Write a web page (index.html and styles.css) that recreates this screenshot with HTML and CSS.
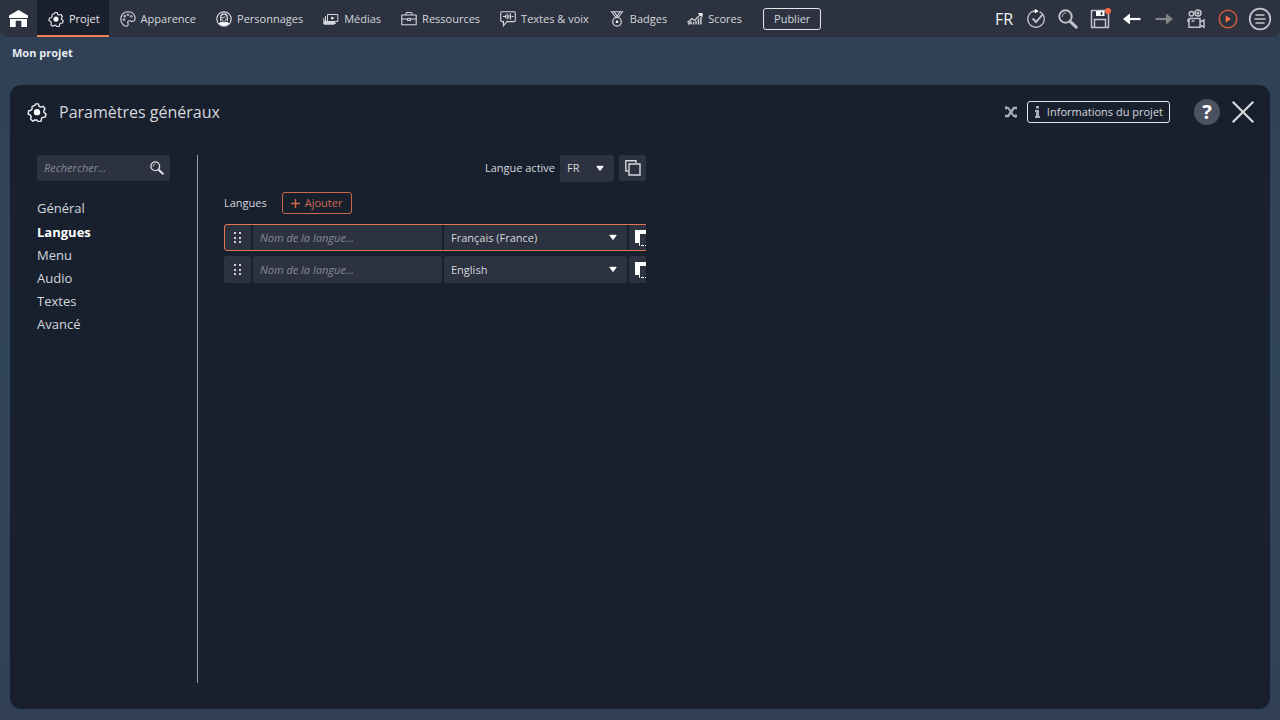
FILE: index.html
```html
<!DOCTYPE html>
<html lang="fr">
<head>
<meta charset="utf-8">
<meta name="viewport" content="width=device-width, initial-scale=1">
<title>Paramètres généraux</title>
<link rel="stylesheet" href="styles.css">
</head>
<body class="app">
<svg class="defs" aria-hidden="true">
  <symbol id="gear" viewBox="0 0 24 24"><path d="M10.3 2.2h3.4l.8 3 1.9.9 3-.9 2.2 2.9-1.5 2.6.4 2 2.4 1.8-1 3.5-3.1.4-1.5 1.5-.1 2.8-3.4 1.2-2.1-2.3h-2.1l-2.5 1.3-2.8-2.2.7-3-.9-1.9-2.7-1.4.4-3.6 3-.9 1.3-1.6.1-3.1 3.3-1.1z" fill="none" stroke="currentColor" stroke-width="1.700" stroke-linejoin="round"/><circle cx="12" cy="12.200" r="3.800" fill="#fff"/></symbol>
  <symbol id="search" viewBox="0 0 20 20"><circle cx="7.500" cy="7.500" r="6.200" fill="none" stroke="currentColor" stroke-width="2"/><path d="M4.400 7.900A3.400 3.400 0 0 1 7.800 4.100" fill="none" stroke="currentColor" stroke-width="1"/><path d="M12.400 12.600l5.800 5.600" stroke="currentColor" stroke-width="3" stroke-linecap="round"/></symbol>
  <symbol id="caret" viewBox="0 0 10 7"><path d="M1.800 1.300h6.400L5 5.600z" fill="#fff" stroke="#fff" stroke-linejoin="round"/></symbol>
  <symbol id="grip" viewBox="0 0 8 12"><path d="M0 0h2v2H0zM5 0h2v2H5zM0 5h2v2H0zM5 5h2v2H5zM0 9h2v2H0zM5 9h2v2H5z" fill="#cfd2d8"/></symbol>
  <symbol id="duplicate" viewBox="0 0 16 16"><path d="M0 0h13v4H5v9H0z" fill="#fff"/><path d="M4.500 13v2.500h11v-11" fill="none" stroke="#fff" stroke-dasharray="3 1"/></symbol>
</svg>

<header class="topbar">
  <button class="home" aria-label="Accueil"><svg width="21" height="18" viewBox="0 0 21 18"><path d="M10.500 0L20 5.500V8H1V5.500zM2 9h17v8H2z" fill="#fff"/><path d="M1 8.500h19M8 17v-6h5v6" fill="#2c323f" stroke="#2c323f" stroke-width=".6"/></svg></button>
  <nav class="tabs" aria-label="Navigation principale">
    <a class="tab tab-active" href="#projet"><svg class="icon"><use href="#gear"/></svg>Projet</a>
    <a class="tab" href="#apparence"><svg class="icon" viewBox="0 0 16 16"><path d="M8 .8C3.500.8.8 4 .8 8s3 7.200 5.500 7.200c2.400 0 2-2.200 1.500-3.400s.6-2.200 2-2 2.300 1.200 3.700.3S15.300 7.500 15 6C14.200 2.700 11.200.8 8 .8z" fill="none" stroke="currentColor" stroke-width="1.100"/><g fill="none" stroke="currentColor"><circle cx="4" cy="8.600" r=".9"/><circle cx="4.700" cy="5.200" r=".9"/><circle cx="8" cy="3.700" r=".9"/><circle cx="11.300" cy="5.400" r=".9"/></g></svg>Apparence</a>
    <a class="tab" href="#personnages"><svg class="icon" viewBox="0 0 16 16"><circle cx="8" cy="8" r="7.200" fill="none" stroke="currentColor" stroke-width="1.200"/><path d="M4.700 10V6.300a3.300 3.300 0 0 1 6.600 0V10" fill="none" stroke="currentColor" stroke-width="1.300"/><path d="M5.500 6.500Q8.500 7 9.500 5.200M6 7.500c0 4 4 4 4 0" fill="none" stroke="currentColor" stroke-width=".9"/><path d="M2.600 12.600Q4 11 6.300 10.800q1.700 1.300 3.400 0 2.300.2 3.700 1.800Q8 17.500 2.600 12.600z" fill="#fff"/></svg>Personnages</a>
    <a class="tab" href="#medias"><svg class="icon" viewBox="0 0 16 16"><g fill="none" stroke="currentColor"><path d="M4.500 3.500h10.300v7H4.500zM2.500 5v7.400H13M.8 7v6h10.500"/></g><path d="M1 10l2-1 1 1.500h8V12l-1 1.500H1z" fill="currentColor"/><path d="M8.300 5.400l3.200 1.700-3.200 1.700z" fill="#fff"/></svg>Médias</a>
    <a class="tab" href="#ressources"><svg class="icon" viewBox="0 0 16 16"><path d="M.8 4h14.400v9.700H.8zM.8 8h5.700m3 0h5.700M6.500 7.500h3v2h-3zM5 4V2.500q0-1 1-1h4q1 0 1 1V4" fill="none" stroke="currentColor" stroke-width="1.100" stroke-linejoin="round"/></svg>Ressources</a>
    <a class="tab" href="#textes"><svg class="icon" viewBox="0 0 16 16"><path d="M2 .8h12.300q1 0 1 1v7.800q0 1-1 1H7l-3.600 4 .1-4H2q-1.200 0-1.200-1V1.800q0-1 1.200-1zM3 5.500h2m6.500 0h2M5.500 4v3M7.200 2.500v6M8.800 4v3.200M10.500 2.500v6" fill="none" stroke="currentColor" stroke-width="1.100"/></svg>Textes &amp; voix</a>
    <a class="tab" href="#badges"><svg class="icon" viewBox="0 0 16 16"><path d="M2.500.8h11L9.500 6h-3zM5 .8L8 5l3-4.200" fill="none" stroke="currentColor" stroke-width="1.100"/><circle cx="8" cy="10.800" r="4.300" fill="none" stroke="currentColor" stroke-width="1.200"/><circle cx="8" cy="10.800" r="1.300" fill="#fff"/></svg>Badges</a>
    <a class="tab" href="#scores"><svg class="icon" viewBox="0 0 16 16"><path d="M.5 11.500l4.500-4 2.500 2L14 3" fill="none" stroke="currentColor" stroke-width="1.200"/><path d="M10.800 2H15.500V6.500z" fill="#fff"/><path d="M1 13.500l2-2M4 13.500v-3.200M6.500 13.500V11M9 13.500V9.800M11.500 13.500V7.500M13.900 13.500V6" stroke="currentColor" stroke-width="1.400"/></svg>Scores</a>
  </nav>
  <button class="outline-btn publish">Publier</button>
  <div class="tools">
    <button class="tool lang">FR</button>
    <button class="tool" aria-label="Vérifier"><svg width="20" height="20" viewBox="0 0 20 20" fill="none" stroke="currentColor"><path d="M13.500 2.600A8.200 8.200 0 1 1 8.800 1.900" stroke-width="1.300"/><path d="M16.500 5.500L10 13 6.700 9.500" stroke-width="1.900"/><path d="M9 .5l3 1.600-3 1.600z" fill="#fff" stroke="#fff"/></svg></button>
    <button class="tool" aria-label="Rechercher"><svg width="20" height="20"><use href="#search"/></svg></button>
    <button class="tool save" aria-label="Enregistrer"><svg width="20" height="20" viewBox="0 0 20 20" fill="none" stroke="currentColor"><path d="M1.500 1.500h14l3 3v14h-17zM4.500 18V10.500h11V18" stroke-width="1.500"/><path d="M6 2h8.500v5H6z" fill="#fff" stroke="none"/><path d="M11.500 3v3" stroke="#2c323f" stroke-width="1.600"/></svg><span class="dot"></span></button>
    <button class="tool bright" aria-label="Annuler"><svg width="20" height="20" viewBox="0 0 20 20"><path d="M8 4.500v11L1 10z" fill="currentColor"/><path d="M6 10h12.500" stroke="currentColor" stroke-width="2.200"/></svg></button>
    <button class="tool muted" aria-label="Rétablir"><svg width="20" height="20" viewBox="0 0 20 20"><path d="M12 4.500v11l7-5.500z" fill="currentColor"/><path d="M1.500 10H14" stroke="currentColor" stroke-width="2.200"/></svg></button>
    <button class="tool" aria-label="Caméra"><svg width="20" height="20" viewBox="0 0 20 20" fill="none" stroke="currentColor" stroke-width="1.500"><circle cx="5.500" cy="4.800" r="2.300"/><circle cx="12" cy="4" r="3"/><circle cx="12" cy="4" r=".8"/><path d="M3 9.500h11v8.700H3zM14 13l4-2v7.200L14 16M2 10v3M5.500 12h3"/></svg></button>
    <button class="tool play" aria-label="Lecture"><svg width="20" height="20" viewBox="0 0 20 20"><circle cx="10" cy="10" r="8.800" fill="none" stroke="#c9593c" stroke-width="1.600"/><path d="M7.700 6.200L12.800 10l-5.100 3.800z" fill="#ff6e45"/></svg></button>
    <button class="tool" aria-label="Menu"><svg width="24" height="24" viewBox="0 0 24 24" fill="none" stroke="currentColor"><circle cx="12" cy="12" r="10.300" stroke-width="1.700"/><path d="M7.500 8h9M6.500 12h11M7.500 16h9" stroke-width="1.500"/></svg></button>
  </div>
</header>

<p class="project-name">Mon projet</p>

<main class="dialog">
  <div class="dialog-head">
    <svg class="title-icon"><use href="#gear"/></svg>
    <h1 class="title">Paramètres généraux</h1>
    <button class="plain-btn" aria-label="Variables"><svg width="12" height="12" viewBox="0 0 12 12" fill="none" stroke="#a9adb5" stroke-width="2"><path d="M0 2h3.200L8.800 10H12"/><path d="M0 10h3.200L8.800 2H12" stroke-width="2.300"/><path d="M1.200 0v3.500M10.800 8.500V12" stroke-width="1.500"/></svg></button>
    <button class="outline-btn info"><svg width="5" height="12" viewBox="0 0 5 12" fill="#a9adb5"><path d="M1 0h3v2.500H1zM0 4h4v6h1v2H0v-2h1V6H0z"/></svg>Informations du projet</button>
    <button class="help" aria-label="Aide">?</button>
    <button class="plain-btn" aria-label="Fermer"><svg width="22" height="22" viewBox="0 0 22 22" stroke="#dcdee2" stroke-width="2"><path d="M.7.7l20.600 20.600M21.300.7L.7 21.300"/></svg></button>
  </div>

  <div class="dialog-body">
    <aside class="sidebar">
      <label class="search">
        <input class="search-input" type="text" placeholder="Rechercher..." aria-label="Rechercher">
        <svg class="search-icon"><use href="#search"/></svg>
      </label>
      <nav class="sections" aria-label="Sections">
        <a class="section" href="#general">Général</a>
        <a class="section section-active" href="#langues">Langues</a>
        <a class="section" href="#menu">Menu</a>
        <a class="section" href="#audio">Audio</a>
        <a class="section" href="#textes-section">Textes</a>
        <a class="section" href="#avance">Avancé</a>
      </nav>
    </aside>

    <section class="content">
      <div class="active-lang">
        <label for="active">Langue active</label>
        <span class="select select-small"><select id="active"><option>FR</option><option>EN</option></select><svg class="caret"><use href="#caret"/></svg></span>
        <button class="cell" aria-label="Copier"><svg width="16" height="16" viewBox="0 0 16 16" fill="none" stroke="#d4d7dc" stroke-width="1.400"><path d="M4 4h11v11H4z"/><path d="M3 11H.8V.8H11V3"/></svg></button>
      </div>
      <div class="langs-head">
        <h2 class="langs-title">Langues</h2>
        <button class="outline-btn add"><svg width="9" height="9" viewBox="0 0 9 9"><path d="M4.500 0v9M0 4.500h9" stroke="currentColor" stroke-width="1.500"/></svg>Ajouter</button>
      </div>
      <ul class="langs">
        <li class="lang-row lang-row-selected">
          <button class="cell" aria-label="Déplacer"><svg width="8" height="12"><use href="#grip"/></svg></button>
          <input class="name" type="text" placeholder="Nom de la langue..." aria-label="Nom de la langue 1">
          <span class="select select-wide"><select aria-label="Langue 1"><option>Français (France)</option></select><svg class="caret"><use href="#caret"/></svg></span>
          <button class="cell" aria-label="Dupliquer la langue 1"><svg width="16" height="16"><use href="#duplicate"/></svg></button>
        </li>
        <li class="lang-row">
          <button class="cell" aria-label="Déplacer"><svg width="8" height="12"><use href="#grip"/></svg></button>
          <input class="name" type="text" placeholder="Nom de la langue..." aria-label="Nom de la langue 2">
          <span class="select select-wide"><select aria-label="Langue 2"><option>English</option></select><svg class="caret"><use href="#caret"/></svg></span>
          <button class="cell" aria-label="Dupliquer la langue 2"><svg width="16" height="16"><use href="#duplicate"/></svg></button>
        </li>
      </ul>
    </section>
  </div>
</main>
</body>
</html>
```
FILE: styles.css
```css
* { box-sizing: border-box; }

.app {
  margin: 0;
  min-height: 100vh;
  display: flex;
  flex-direction: column;
  background: linear-gradient(#304054, #31455a 50%, #314056);
  color: #d4d7dd;
  font: 11px/16px "Open Sans", sans-serif;
}

button, input, select { font: inherit; color: inherit; margin: 0; }
button { display: flex; align-items: center; justify-content: center; padding: 0; border: 0; background: none; cursor: pointer; }
a { color: inherit; text-decoration: none; }
svg { display: block; flex: none; }
.defs { position: absolute; width: 0; height: 0; }

.topbar {
  display: flex;
  align-items: center;
  height: 37px;
  padding-right: 8px;
  background: #2c323f;
  border-radius: 0 0 8px 8px;
}
.home { width: 37px; height: 37px; }
.tabs { display: flex; align-self: stretch; }
.tab {
  display: flex;
  align-items: center;
  gap: 5px;
  padding: 2px 9px 0 11px;
  border-bottom: 2px solid transparent;
}
.tab-active { background: #1a202d; border-color: #ee7d59; color: #e6e8ec; }
.icon { width: 16px; height: 16px; }

.outline-btn {
  height: 22px;
  padding: 0 10px;
  border: 1px solid #e4e6ea;
  border-radius: 3px;
}
.publish { margin-left: 12px; }

.tools { display: flex; margin-left: auto; }
.tool { position: relative; width: 32px; height: 32px; color: #c0c3ca; }
.tools .tool:last-child { width: 24px; margin-left: 4px; }
.tools .lang { font-size: 16px; font-weight: 500; color: #f2f3f5; }
.tools .bright { color: #fff; }
.tools .muted { color: #858585; }
.dot {
  position: absolute;
  top: 5px;
  right: 5px;
  width: 6px;
  height: 6px;
  border-radius: 50%;
  background: #ff6844;
}

.project-name { margin: 8px 12px 24px; font-weight: 700; color: #e6ebf1; }

.dialog {
  flex: 1;
  display: flex;
  flex-direction: column;
  margin: 0 10px 11px;
  padding: 13px 16px 26px 17px;
  border-radius: 11px;
  background: #19202d;
}
.dialog-head { display: flex; align-items: center; height: 28px; }
.title-icon { width: 20px; height: 20px; color: #eceef1; }
.title { margin: 0 auto 0 12px; font-size: 16px; line-height: 24px; font-weight: 400; }
.info { gap: 7px; margin: 0 24px 0 10px; padding: 0 6px 0 7px; }
.help {
  width: 26px;
  height: 26px;
  margin-right: 12px;
  border-radius: 50%;
  background: #4b5160;
  color: #fff;
  font-size: 20px;
  font-weight: 700;
}

.dialog-body { flex: 1; display: flex; margin-top: 29px; padding-left: 10px; }
.sidebar { width: 161px; padding-right: 27px; border-right: 1px solid #989ba2; }
.search { display: flex; align-items: center; height: 26px; padding: 0 6px 0 7px; background: #2c323f; border-radius: 3px; }
.search-input { flex: 1; min-width: 0; padding: 0; border: 0; background: none; }
.search-icon { width: 14px; height: 14px; color: #dcdee2; }
::placeholder { color: #858a95; opacity: 1; font-style: italic; }

.sections { display: flex; flex-direction: column; margin-top: 16px; }
.section { font-size: 13px; line-height: 23px; }
.section-active { line-height: 24px; font-weight: 700; color: #fff; }

.content { width: 448px; padding-left: 26px; overflow: hidden; }
.active-lang { display: flex; align-items: center; justify-content: flex-end; gap: 5px; height: 26px; }
.cell { flex: none; width: 27px; height: 27px; border-radius: 3px; background: #2c323f; }
.active-lang .cell, .select-small select { height: 26px; }
.select { position: relative; flex: none; }
.select select {
  display: block;
  width: 100%;
  height: 27px;
  padding: 0 24px 0 7px;
  border: 0;
  border-radius: 3px;
  appearance: none;
  background: #2c323f;
}
.select-small { width: 54px; }
.select-wide { width: 183px; }
.caret { position: absolute; top: 10px; right: 9px; width: 10px; height: 7px; pointer-events: none; }

.langs-head { display: flex; align-items: center; gap: 15px; margin-top: 11px; }
.langs-title { margin: 0; font-size: 11px; font-weight: 400; }
.add { gap: 5px; padding: 0 9px 0 8px; border-color: #c9664b; color: #cd6a4e; }

.langs { display: flex; flex-direction: column; gap: 5px; margin: 10px 0 0; padding: 0; list-style: none; }
.lang-row { position: relative; display: flex; gap: 2px; width: 432px; border-radius: 3px; }
.lang-row-selected::after {
  content: "";
  position: absolute;
  inset: 0;
  border: 1px solid #e5754f;
  border-radius: 3px;
  pointer-events: none;
}
.name { width: 189px; height: 27px; padding: 0 7px; border: 0; border-radius: 3px; background: #2c323f; }
```
